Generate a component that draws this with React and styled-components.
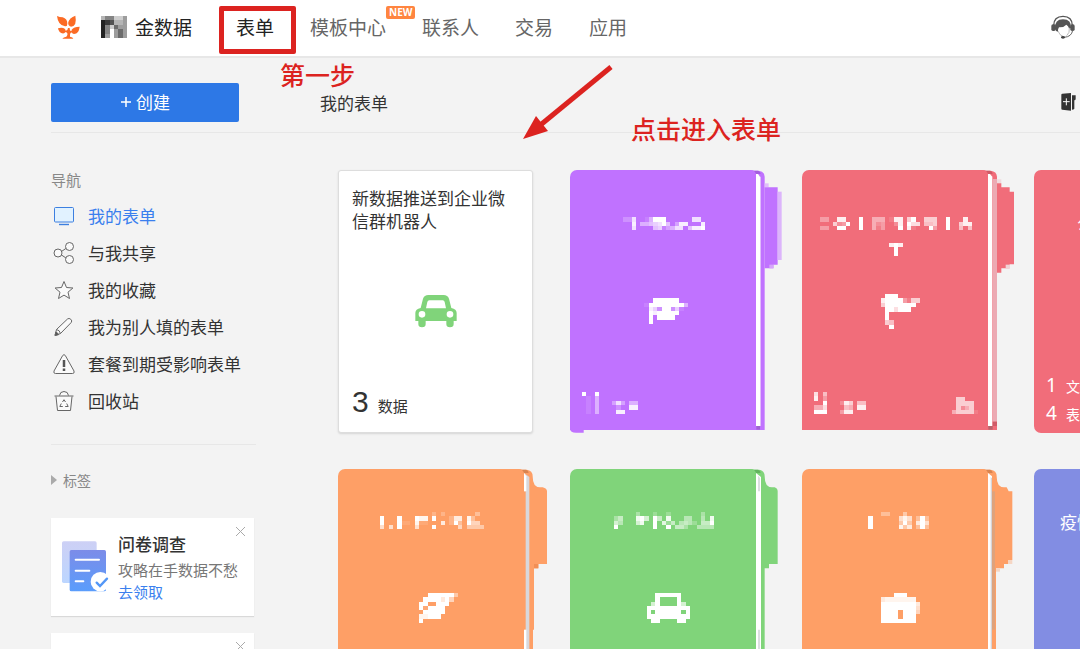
import React from 'react';
import styled, { createGlobalStyle, ThemeProvider } from 'styled-components';

const theme = {
    font: '"Noto Sans CJK SC", "Noto Sans", sans-serif',
    colours: {
        page: '#f3f3f3',
        text: '#333',
        textSecondary: '#666',
        muted: '#888',
        line: '#e7e7e7',
        primary: '#2d78e6',
        link: '#3a7fee',
        mark: '#dc2320',
        badge: '#ff8540'
    }
};

const GlobalStyle = createGlobalStyle`
    * {
        box-sizing: border-box;
    }

    body {
        margin: 0;
        overflow: hidden;
        background: ${ theme.colours.page };
        color: ${ theme.colours.text };
        font-family: ${ theme.font };
    }

    a {
        color: inherit;
        text-decoration: none;
    }

    button {
        border: 0;
        padding: 0;
        background: none;
        font-family: inherit;
        cursor: pointer;
    }
`;

const Page = styled.div`
    position: relative;
    height: 100vh;
    overflow: hidden;
`;

const TopBar = styled.header`
    display: flex;
    align-items: center;
    height: 58px;
    padding: 0 5px 2px 56px;
    background: #fff;
    border-bottom: 2px solid ${ props => props.theme.colours.line };
`;

const Brand = styled.a`
    display: flex;
    align-items: center;
    gap: 20px;
    margin-right: 44px;
    font-size: 19px;
    line-height: 28px;
    color: #222;
`;

const BrandName = styled.span`
    display: flex;
    align-items: center;
    gap: 8px;
`;

const TopNav = styled.nav`
    display: flex;
    flex: 1;
    gap: 36px;
`;

const TopLink = styled.a`
    position: relative;
    font-size: 19px;
    line-height: 28px;
    color: ${ props => props.$active ? '#222' : props.theme.colours.textSecondary };
`;

const NewBadge = styled.span`
    position: absolute;
    left: 100%;
    top: -7px;
    padding: 0 3px;
    border-radius: 2px;
    background: ${ props => props.theme.colours.badge };
    color: #fff;
    font: 700 10px/13px "Open Sans", sans-serif;
`;

const Columns = styled.div`
    display: flex;
    padding-left: 51px;
`;

const Sidebar = styled.aside`
    flex: none;
    width: 205px;
    padding-top: 25px;
`;

const CreateButton = styled.button`
    display: flex;
    align-items: center;
    justify-content: center;
    gap: 4px;
    width: 188px;
    height: 39px;
    margin-bottom: 10px;
    padding-bottom: 2px;
    border-radius: 2px;
    background: ${ props => props.theme.colours.primary };
    color: #fff;
    font-size: 17px;
`;

const Divider = styled.hr`
    margin: 0;
    border: 0;
    border-top: 1px solid ${ props => props.theme.colours.line };
`;

const SideRule = styled(Divider)`
    margin-top: 25px;
`;

const SideHeading = styled.h2`
    margin: 36px 0 6px;
    font-size: 15px;
    font-weight: 400;
    line-height: 22px;
    color: ${ props => props.theme.colours.muted };
`;

const SideLink = styled.a`
    display: flex;
    align-items: center;
    gap: 12px;
    height: 37px;
    font-size: 17px;
    color: ${ props => props.$active ? props.theme.colours.link : props.theme.colours.text };

    svg {
        margin-left: 1px;
    }
`;

const TagsToggle = styled.button`
    display: flex;
    align-items: center;
    gap: 6px;
    margin: 24px 0 27px;
    font-size: 14px;
    line-height: 22px;
    color: ${ props => props.theme.colours.muted };
`;

const Promo = styled.section`
    position: relative;
    display: flex;
    gap: 9px;
    width: 203px;
    height: 98px;
    margin-bottom: 17px;
    padding: 16px 10px;
    background: #fff;
    box-shadow: 0 1px 1px #d9d9d9;
`;

const PromoText = styled.div`
    font-size: 15px;
    line-height: 22px;
    color: #777;
    white-space: nowrap;

    h3 {
        margin: 0;
        font-size: 17px;
        font-weight: 500;
        line-height: 20px;
        color: ${ props => props.theme.colours.text };
    }

    p {
        margin: 5px 0 0;
    }

    a {
        display: block;
        color: ${ props => props.theme.colours.link };
    }
`;

const CloseButton = styled.button`
    position: absolute;
    right: 8px;
    top: 8px;
    display: flex;
`;

const Main = styled.main`
    flex: 1;
    min-width: 0;
    overflow: hidden;
`;

const MainHead = styled.div`
    display: flex;
    align-items: center;
    justify-content: space-between;
    height: 75px;
    padding: 14px 4px 0 64px;
    border-bottom: 1px solid ${ props => props.theme.colours.line };

    h1 {
        margin: 0;
        font-size: 17px;
        font-weight: 400;
    }
`;

const Grid = styled.div`
    display: grid;
    grid-template-columns: repeat(4, 195px);
    grid-auto-rows: 263px;
    gap: 36px 37px;
    padding: 37px 0 0 82px;
`;

const FormCard = styled.a`
    display: flex;
    flex-direction: column;
    align-items: center;
    padding: 15px 13px 8px;
    border: 1px solid #ddd;
    border-radius: 3px;
    background: #fff;
    box-shadow: 0 1px 2px #d5d5d5;
`;

const FormTitle = styled.span`
    align-self: stretch;
    height: 108px;
    font-size: 17px;
    line-height: 23px;
`;

const Count = styled.span`
    display: flex;
    align-self: stretch;
    align-items: baseline;
    gap: 9px;
    margin-top: auto;
    font-size: ${ props => props.$small ? 14 : 15 }px;
    line-height: ${ props => props.$small ? 27 : 36 }px;

    b {
        font: ${ props => props.$small ? '400 19px "Noto Sans"' : '400 30px "Liberation Sans"' }, sans-serif;
    }
`;

const Folder = styled.a`
    display: flex;
    align-items: flex-start;
    color: #fff;
`;

const Cover = styled.span`
    z-index: 1;
    flex: none;
    display: grid;
    grid-template-rows: 81px 1fr auto;
    justify-items: center;
    width: 186px;
    height: ${ props => props.$whole ? 263 : 260 }px;
    padding: 43px 10px 16px 12px;
    border-radius: ${ props => props.$whole ? '7px' : '7px 5px 0 0' };
    background: ${ props => props.$colour };
    font-size: 17px;
    line-height: 20px;
    white-space: nowrap;
`;

const CoverFoot = styled.span`
    display: flex;
    align-items: flex-end;
    justify-content: space-between;
    width: 100%;
`;

const CoverCounts = styled.span`
    width: 100%;
    margin-bottom: -11px;
`;

const Edge = styled.svg`
    flex: none;
    overflow: visible;
`;

const MarkBox = styled.div`
    position: absolute;
    left: 219px;
    top: 6px;
    width: 77px;
    height: 48px;
    border: 5px solid ${ props => props.theme.colours.mark };
    border-radius: 2px;
`;

const MarkText = styled.div`
    position: absolute;
    left: ${ props => props.$left }px;
    top: ${ props => props.$top }px;
    font-size: 25px;
    font-weight: 500;
    line-height: 36px;
    color: ${ props => props.theme.colours.mark };
`;

const MarkArrow = styled.svg`
    position: absolute;
    left: 520px;
    top: 60px;
`;

// Each digit is one tile, 0 is clear and 9 is solid
function Mosaic({ rows, colour = '#fff' }) {
    const cols = rows[0].length;

    return (
        <svg
            width={ Math.round(cols * 13 / 3) }
            height={ Math.round(rows.length * 13 / 3) }
            viewBox={ `0 0 ${cols} ${rows.length}` }
            preserveAspectRatio="none"
            shapeRendering="crispEdges"
            aria-hidden="true"
        >
            { rows.map((row, y) => row.split('').map((level, x) => level !== '0' && (
                <rect key={ `${x}-${y}` } x={ x } y={ y } width="1" height="1" fill={ colour } fillOpacity={ level / 9 } />
            ))) }
        </svg>
    );
}

const LOGO_TILES = ['355224', '987334', '952644', '950464', '940464'];

// Edge shapes are [path, fill], drawn in thirds of a pixel from the cover's top right corner
const FOLDERS = [
    {
        id: 'violet',
        colour: '#c072ff',
        edge: [
            ['M-20 2H8Q26 4 26 20V780H-20Z', '#c072ff'],
            ['M-20 2H6Q14 4 14 12H0Z', '#a45fdc'],
            ['M-558 770V776Q-557 788-540 788H-517V770Z', '#c072ff'],
            ['M0 12H6L12 20V768H0Z', '#fff'],
            ['M12 20H15V768H12Z', '#dfbbfb'],
            ['M1 768H12V779H1Z', '#a063d2'],
            ['M26 40H38V52H26Z', '#e0bdf9'],
            ['M26 52H65V284H52V295H26Z', '#c072ff'],
            ['M65 65H77V270H65Z', '#dcb4fb'],
            ['M40 284H53V295H40Z', '#d6a6fa']
        ],
        title: [
            '0000000000000000000',
            '2270014999000000770',
            '0080445679503880008',
            '0070000561347705889'
        ],
        icon: [
            '00000000000',
            '00099999900',
            '01999999994',
            '00862992610',
            '00989999900',
            '00909999000',
            '00900000000'
        ],
        stats: ['9009000000000', '0104000000000', '0104000373044', '0104000020088', '0104000088000']
    },
    {
        id: 'red',
        colour: '#f16d7a',
        edge: [
            ['M-20 2H8Q26 4 27 20V780H-20Z', '#f16d7a'],
            ['M-20 2H6Q14 4 14 12H0Z', '#cf5a66'],
            ['M0 12H6L13 20V768H0Z', '#fff'],
            ['M14 27H27V755H14Z', '#ecaab3'],
            ['M14 755H27V768H14Z', '#d05b68'],
            ['M1 768H14V779H1Z', '#b9636c'],
            ['M27 28H40V40H27Z', '#f0dadd'],
            ['M27 40H40V52H65V65H78V283H65V295H53V295H40V308H27Z', '#f16d7a'],
            ['M53 284H66V295H53Z', '#f0d3d7']
        ],
        title: [
            '00000000000000000000000000000000000',
            '33008800090044401880690066600900080',
            '00062390090042300280977055600900688',
            '33009900090041300090810009300900505',
            '00000000000000000000000000000000000',
            '00000000000000000000000000000000000',
            '00000000000000000000000000000000000',
            '00000000000000008980000000000000000',
            '00000000000000000900000000000000000',
            '00000000000000000900000000000000000'
        ],
        icon: [
            '00099900000',
            '00899993166',
            '00699999990',
            '00099799900',
            '00090000000',
            '00090000000',
            '00065000000',
            '00009000000'
        ],
        stats: ['705000000000', '803000000000', '009000286055', '447000054088', '999000388000'],
        extra: ['066000', '066660', '062460', '466661']
    },
    {
        id: 'rose',
        colour: '#f16d7a',
        name: '公司人员信息',
        counts: [[1, '文件夹'], [4, '表单']]
    },
    {
        id: 'orange',
        colour: '#fe9f66',
        edge: [
            ['M-20 2H8Q26 4 26 22Q26 55 48 55H56Q69 58 69 67V285H43V298H30V789H-20Z', '#fe9f66'],
            ['M-20 2H6Q14 4 14 12H0Z', '#d98450'],
            ['M0 12L16 24V789H5V67H0Z', '#d8d8dc'],
            ['M0 12L7 22V67H0Z', '#fff'],
            ['M0 482H7V789H0Z', '#fff'],
            ['M30 285H43V298H30Z', '#f28f55'],
            ['M27 482H32V789H27Z', '#f3f3f3']
        ],
        title: [
            '000000000000202000000030',
            '900090009880900027708300',
            '900091108110007029309550',
            '606090006000900000504444'
        ],
        icon: [
            '000009999994',
            '000099997950',
            '000990099900',
            '000919999000',
            '000099999000',
            '000889990000',
            '000900000000'
        ]
    },
    {
        id: 'green',
        colour: '#80d47a',
        edge: [
            ['M-20 2H8Q26 4 26 22Q26 55 48 55H56Q65 58 65 67V285H39V298H26V789H-20Z', '#80d47a'],
            ['M-20 2H6Q14 4 14 12H0Z', '#62b35e'],
            ['M0 12L15 24V789H0Z', '#fff'],
            ['M6 20L12 26V67H6Z', '#dcdfe0'],
            ['M6 482H12V789H6Z', '#dcdfe0']
        ],
        title: [
            '00000300020020000000300',
            '35000896095080004400408',
            '64000680090725045420559',
            '90000000090090553004444'
        ],
        icon: [
            '000099999900',
            '000090000900',
            '000690000960',
            '009999999999',
            '009099999909',
            '009999999999',
            '000990000990'
        ]
    },
    {
        id: 'amber',
        colour: '#fe9f66',
        edge: [
            ['M-20 2H8Q26 4 26 22Q26 55 48 55H56L62 67H73V273H60V285H48V298H24V789H-20Z', '#fe9f66'],
            ['M-20 2H6Q14 4 14 12H0Z', '#d98450'],
            ['M-3 12H0L12 22V789H-3Z', '#fff'],
            ['M8 24L12 28V789H8Z', '#d5d3d6'],
            ['M12 67H21V482H12Z', '#dfa27b'],
            ['M60 273H73V285H60Z', '#f5d6c4'],
            ['M24 298H36V308H24Z', '#f5d6c4']
        ],
        title: [
            '000033000400000',
            '090000006860393',
            '090000004940796',
            '090000008470393'
        ],
        icon: [
            '00000999000',
            '00788888880',
            '00999999997',
            '00999999996',
            '00999909995',
            '00999909990',
            '00999999990'
        ]
    },
    {
        id: 'indigo',
        colour: '#828de3',
        name: '疫情防控信息登记',
        counts: [[2, '表单']]
    }
];

function FolderCard({ folder }) {
    return (
        <Folder href="#">
            <Cover $colour={ folder.colour } $whole={ !folder.edge }>
                { folder.title ? <Mosaic rows={ folder.title } /> : <span>{ folder.name }</span> }
                { folder.icon ? <Mosaic rows={ folder.icon } /> : <span /> }
                { folder.counts ? (
                    <CoverCounts>
                        { folder.counts.map(([count, label]) => (
                            <Count key={ label } $small><b>{ count }</b>{ label }</Count>
                        )) }
                    </CoverCounts>
                ) : (
                    <CoverFoot>
                        { folder.stats && <Mosaic rows={ folder.stats } /> }
                        { folder.extra && <Mosaic rows={ folder.extra } /> }
                    </CoverFoot>
                ) }
            </Cover>
            { folder.edge && (
                <Edge width="26" height="263" viewBox="0 0 78 789" aria-hidden="true">
                    { folder.edge.map(([d, fill]) => <path key={ d } d={ d } fill={ fill } />) }
                </Edge>
            ) }
        </Folder>
    );
}

const SIDE_ICONS = {
    screen: (
        <>
            <rect x="2.5" y="3.5" width="19" height="14.5" rx="1" fill="#e1f2ff" stroke="#3c7fe0" />
            <path d="M7 20.5h10" stroke="#3c7fe0" strokeWidth="1.4" />
        </>
    ),
    share: (
        <>
            <path d="M9.5 10.5l5-3.5M9.5 14l4.5 3" />
            <circle cx="6" cy="12" r="4" />
            <circle cx="17.5" cy="5.5" r="4" />
            <circle cx="17.5" cy="18.5" r="4" />
        </>
    ),
    star: <path d="M12 3.5l2.5 6 6.4.5-4.9 4.2 1.5 6.3-5.5-3.4-5.5 3.4 1.5-6.3L3.1 10l6.4-.5z" />,
    pencil: (
        <>
            <path d="M4.5 14.5L15.5 4q1.5-1.3 3.3.3t.3 3.3L8.5 18.5M4.5 14.5q3.2.5 4 4M4.5 14.5L3 20.500l5.500-2" />
            <path d="M3 20.5l.8-3.5q2 .5 2.700 2.700z" fill="#555" />
        </>
    ),
    warning: (
        <>
            <path d="M10.7 3.5q1.3-1.8 2.6 0l8.7 15.5q.8 2.5-1.5 2.5h-17q-2.300 0-1.500-2.500z" />
            <path d="M12 8v7M12 16.5v2.5" strokeWidth="2.5" stroke="#555" />
        </>
    ),
    bin: (
        <>
            <path d="M2.5 7h19M4 7.5l1.5 14h13l1.5-14M7.5 6.5q.5-4 4.5-4t4.5 4" />
            <path d="M10.5 13l1.5-2.3 1.5 2.3M9.3 14.5l-1.5 3h3M14.7 14.5l1.500 3h-3" />
        </>
    )
};

const SIDE_LINKS = [
    ['screen', '我的表单'],
    ['share', '与我共享'],
    ['star', '我的收藏'],
    ['pencil', '我为别人填的表单'],
    ['warning', '套餐到期受影响表单'],
    ['bin', '回收站']
];

const TOP_LINKS = ['表单', '模板中心', '联系人', '交易', '应用'];

function SproutLogo() {
    return (
        <svg width="25" height="26" viewBox="0 0 75 78" fill="#fb6b25" aria-hidden="true">
            <path d="M3 6Q11 10 20 10Q34 14 34 29Q34 38 27 37Q6 34 3 6Z" />
            <path d="M58 5Q64 36 45 38Q35 35 37 24Q40 12 58 5Z" />
            <path d="M6 43Q19 39 27 45Q32 53 24 58Q9 60 6 43Z" />
            <path d="M71 38Q69 59 54 60Q44 57 47 47Q53 38 71 38Z" />
            <path d="M27 50Q35 52 36 42H41Q41 53 48 51V55Q42 56 42 62V68Q51 69 52 74H19Q22 69 31 68Q36 66 34 58Q32 54 26 54Z" />
        </svg>
    );
}

function SupportIcon() {
    return (
        <svg width="24" height="25" viewBox="0 0 72 75" aria-hidden="true">
            <path d="M8 32Q8 4 36 4T64 32" fill="none" stroke="#555" strokeWidth="4" />
            <path d="M12 42Q10 13 36 13T60 40L54 40Q52 32 46 29Q38 38 24 37Q20 42 21 50Q14 50 12 42Z" fill="#555" />
            <path d="M21 48Q26 62 36 64M55 38Q57 54 47 62" fill="none" stroke="#999" strokeWidth="2" />
            <rect x="1" y="28" width="13" height="20" rx="5" fill="#555" />
            <rect x="58" y="28" width="13" height="20" rx="5" fill="#555" />
            <path d="M65 46Q62 65 40 67" fill="none" stroke="#666" strokeWidth="3" />
            <ellipse cx="36" cy="67" rx="6" ry="4" fill="#444" />
        </svg>
    );
}

function NewFolderIcon() {
    return (
        <svg width="15" height="18" viewBox="0 0 45 54" aria-hidden="true">
            <path d="M1 5Q1 2 4 2L30 0V53L4 50Q1 50 1 47Z" fill="#333" />
            <path d="M33 7H44V17Q44 22 40 22V47Q38 50 33 50Z" fill="#333" />
            <path d="M6 26H26M16 16V37" stroke="#fff" strokeWidth="3" />
        </svg>
    );
}

function CarIcon() {
    return (
        <svg width="42" height="34" viewBox="0 0 126 100" aria-hidden="true">
            <path
                fill="#80d47a"
                fillRule="evenodd"
                d="M40 2H86Q98 2 102 13L109 41Q125 44 125 56V80H116V89Q116 99 105 99T94 89V80H32V89Q32 99 21 99T10 89V80H1V56Q1 44 17 41L24 13Q28 2 40 2ZM43 18Q38 18 37 23L33 42H93L89 23Q88 18 83 18ZM21 50A10 10 0 1 0 21 70A10 10 0 1 0 21 50ZM105 50A10 10 0 1 0 105 70A10 10 0 1 0 105 50Z"
            />
        </svg>
    );
}

function SurveyIcon() {
    return (
        <svg width="48" height="58" viewBox="0 0 144 174" aria-hidden="true">
            <defs>
                <linearGradient id="sheetBack" x1="0" y1="0" x2="0" y2="1">
                    <stop offset="0" stopColor="#cdd0f5" />
                    <stop offset="1" stopColor="#bcd6ff" />
                </linearGradient>
                <linearGradient id="sheetFront" x1="0" y1="0" x2="0" y2="1">
                    <stop offset="0" stopColor="#7c8ce8" />
                    <stop offset="1" stopColor="#5a9dfc" />
                </linearGradient>
            </defs>
            <rect x="3" y="22" width="104" height="125" rx="5" fill="url(#sheetBack)" />
            <rect x="26" y="48" width="109" height="124" rx="5" fill="url(#sheetFront)" />
            <path d="M44 77H114M44 110H85M44 142H67" stroke="#fff" strokeWidth="6" strokeLinecap="round" />
            <circle cx="118" cy="143" r="29" fill="#fff" />
            <path d="M107 146L117 156L138 134" fill="none" stroke="#5397f7" strokeWidth="7" strokeLinecap="round" />
        </svg>
    );
}

function CloseIcon() {
    return (
        <svg width="11" height="11" viewBox="0 0 11 11" stroke="#aaa" aria-hidden="true">
            <path d="M1 1l9 9M10 1l-9 9" />
        </svg>
    );
}

export default function App() {
    return (
        <ThemeProvider theme={ theme }>
            <GlobalStyle />
            <Page>
                <TopBar>
                    <Brand href="#">
                        <SproutLogo />
                        <BrandName><Mosaic rows={ LOGO_TILES } colour="#222" />金数据</BrandName>
                    </Brand>
                    <TopNav>
                        { TOP_LINKS.map((label, index) => (
                            <TopLink key={ label } href="#" $active={ index === 0 }>
                                { label }
                                { index === 1 && <NewBadge>NEW</NewBadge> }
                            </TopLink>
                        )) }
                    </TopNav>
                    <SupportIcon />
                </TopBar>

                <Columns>
                    <Sidebar>
                        <CreateButton>
                            <svg width="12" height="12" viewBox="0 0 12 12" stroke="#fff" strokeWidth="1.5" aria-hidden="true">
                                <path d="M1 6h10M6 1v10" />
                            </svg>
                            创建
                        </CreateButton>
                        <Divider />
                        <nav>
                            <SideHeading>导航</SideHeading>
                            { SIDE_LINKS.map(([icon, label], index) => (
                                <SideLink key={ icon } href="#" $active={ index === 0 }>
                                    <svg width="24" height="24" viewBox="0 0 24 24" fill="#fafafa" stroke="#666" aria-hidden="true">
                                        { SIDE_ICONS[icon] }
                                    </svg>
                                    { label }
                                </SideLink>
                            )) }
                        </nav>
                        <SideRule />
                        <TagsToggle>
                            <svg width="6" height="10" viewBox="0 0 6 10" fill="#aaa" aria-hidden="true"><path d="M0 0l6 5-6 5z" /></svg>
                            标签
                        </TagsToggle>
                        <Promo>
                            <SurveyIcon />
                            <PromoText>
                                <h3>问卷调查</h3>
                                <p>攻略在手数据不愁</p>
                                <a href="#">去领取</a>
                            </PromoText>
                            <CloseButton aria-label="关闭"><CloseIcon /></CloseButton>
                        </Promo>
                        <Promo>
                            <CloseButton aria-label="关闭"><CloseIcon /></CloseButton>
                        </Promo>
                    </Sidebar>

                    <Main>
                        <MainHead>
                            <h1>我的表单</h1>
                            <NewFolderIcon />
                        </MainHead>
                        <Grid>
                            <FormCard href="#">
                                <FormTitle>新数据推送到企业微信群机器人</FormTitle>
                                <CarIcon />
                                <Count><b>3</b>数据</Count>
                            </FormCard>
                            { FOLDERS.map(folder => <FolderCard key={ folder.id } folder={ folder } />) }
                        </Grid>
                    </Main>
                </Columns>

                <MarkBox />
                <MarkText $left={ 280 } $top={ 56 }>第一步</MarkText>
                <MarkText $left={ 631 } $top={ 110 }>点击进入表单</MarkText>
                <MarkArrow width="96" height="84" viewBox="0 0 96 84" aria-hidden="true">
                    <path d="M91 7L18 67" stroke="#dc2320" strokeWidth="5" />
                    <path d="M3 79L16 56L28 71Z" fill="#dc2320" />
                </MarkArrow>
            </Page>
        </ThemeProvider>
    );
}
